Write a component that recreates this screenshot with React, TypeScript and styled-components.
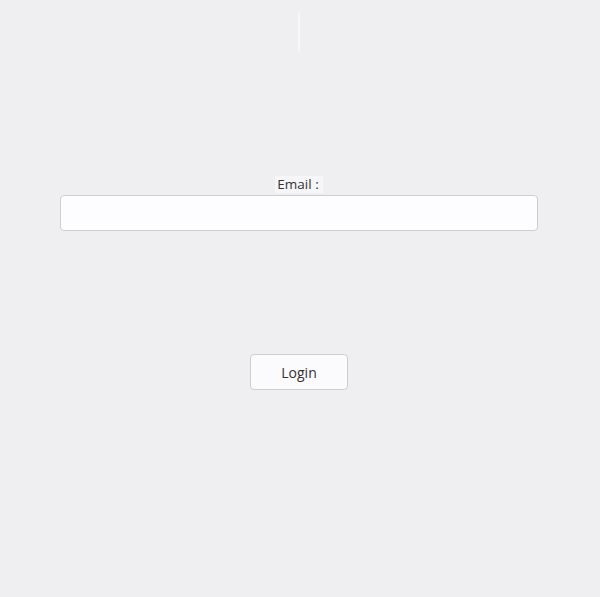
import React from "react";
import styled, { createGlobalStyle } from "styled-components";

const Global = createGlobalStyle`
  html, body { margin: 0; padding: 0; background: #efeef0; }
  body { font-family: "Open Sans", "Noto Sans", sans-serif; }
`;

const Page = styled.div`
  width: 598px;
  height: 597px;
  display: flex;
  flex-direction: column;
  align-items: center;
  padding-top: 12px;
  box-sizing: border-box;
`;

const Divider = styled.div`
  width: 2px;
  height: 40px;
  background: #f7f6f8;
`;

const Field = styled.div`
  margin-top: 124px;
  display: flex;
  flex-direction: column;
  align-items: center;
  width: 478px;
`;

const Label = styled.label`
  font-size: 13.5px;
  line-height: 17px;
  color: #333;
  background: #f6f5f7;
  padding: 0 4px 0 2px;
  margin-bottom: 2px;
`;

const Input = styled.input`
  width: 478px;
  height: 36px;
  box-sizing: border-box;
  border: 1px solid #cfcdd1;
  border-radius: 4px;
  background: #fdfcfe;
  outline: none;
`;

const Button = styled.button`
  margin-top: 123px;
  width: 98px;
  height: 36px;
  box-sizing: border-box;
  border: 1px solid #cfcdd1;
  border-radius: 4px;
  background: #fbfafc;
  font-family: "Open Sans", "Noto Sans", sans-serif;
  font-size: 14px;
  color: #333;
`;

export default function App() {
  return (
    <>
      <Global />
      <Page>
        <Divider />
        <Field>
          <Label>Email :</Label>
          <Input type="email" />
        </Field>
        <Button>Login</Button>
      </Page>
    </>
  );
}
